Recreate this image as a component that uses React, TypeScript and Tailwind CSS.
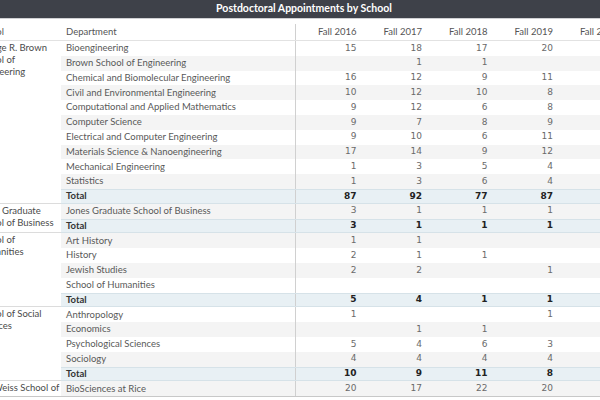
type Row = { dept: string; vals: (number | null)[]; total?: boolean };
type Group = { school: string; rows: Row[]; indent?: boolean };

const groups: Group[] = [
  {
    school: "George R. Brown School of Engineering",
    rows: [
      { dept: "Bioengineering", vals: [15, 18, 17, 20] },
      { dept: "Brown School of Engineering", vals: [null, 1, 1, null] },
      { dept: "Chemical and Biomolecular Engineering", vals: [16, 12, 9, 11] },
      { dept: "Civil and Environmental Engineering", vals: [10, 12, 10, 8] },
      { dept: "Computational and Applied Mathematics", vals: [9, 12, 6, 8] },
      { dept: "Computer Science", vals: [9, 7, 8, 9] },
      { dept: "Electrical and Computer Engineering", vals: [9, 10, 6, 11] },
      { dept: "Materials Science & Nanoengineering", vals: [17, 14, 9, 12] },
      { dept: "Mechanical Engineering", vals: [1, 3, 5, 4] },
      { dept: "Statistics", vals: [1, 3, 6, 4] },
      { dept: "Total", vals: [87, 92, 77, 87], total: true },
    ],
  },
  {
    school: "Jones Graduate School of Business",
    rows: [
      { dept: "Jones Graduate School of Business", vals: [3, 1, 1, 1] },
      { dept: "Total", vals: [3, 1, 1, 1], total: true },
    ],
  },
  {
    school: "School of Humanities",
    rows: [
      { dept: "Art History", vals: [1, 1, null, null] },
      { dept: "History", vals: [2, 1, 1, null] },
      { dept: "Jewish Studies", vals: [2, 2, null, 1] },
      { dept: "School of Humanities", vals: [null, null, null, null] },
      { dept: "Total", vals: [5, 4, 1, 1], total: true },
    ],
  },
  {
    school: "School of Social Sciences",
    rows: [
      { dept: "Anthropology", vals: [1, null, null, 1] },
      { dept: "Economics", vals: [null, 1, 1, null] },
      { dept: "Psychological Sciences", vals: [5, 4, 6, 3] },
      { dept: "Sociology", vals: [4, 4, 4, 4] },
      { dept: "Total", vals: [10, 9, 11, 8], total: true },
    ],
  },
  {
    school: "Weiss School of Natural Sciences",
    indent: true,
    rows: [
      { dept: "BioSciences at Rice", vals: [20, 17, 22, 20] },
      { dept: "Chemistry", vals: [14, 16, 12, 15] },
      { dept: "Earth, Environmental and Planetary Sciences", vals: [8, 9, 7, 6] },
    ],
  },
];

const years = ["Fall 2016", "Fall 2017", "Fall 2018", "Fall 2019", "Fall 2020"];

const font = { fontFamily: "Lato, 'Open Sans', sans-serif" };
const numFont = { fontFamily: "'DejaVu Sans', sans-serif" };

export default function App() {
  let idx = 0;
  return (
    <div className="w-[600px] h-[400px] overflow-hidden bg-white flex flex-col" style={font}>
      <div className="h-[18px] shrink-0 bg-[#3e4149] flex items-center justify-center text-white text-[10.5px] font-bold pl-[8px]">
        Postdoctoral Appointments by School
      </div>
      <div className="h-px shrink-0 bg-[#cfd0d3]" />
      <div className="h-[377px] shrink-0 overflow-hidden">
        <div className="ml-[-26px] w-[700px]">
          {/* header */}
          <div className="flex h-[22px] border-b border-[#e2e2e2] text-[9.5px] text-[#555]">
            <div className="w-[87px] shrink-0 pl-[2px] flex items-end pb-[1px] leading-[14px]">School</div>
            <div className="w-[235px] shrink-0 pl-[5px] flex items-end pb-[1px] leading-[14px] border-r border-[#d0d0d0] mt-[5px]">
              Department
            </div>
            {years.map((y) => (
              <div key={y} className="w-[65.5px] shrink-0 pr-[5px] flex items-end justify-end pb-[1px] leading-[14px]">
                {y}
              </div>
            ))}
          </div>
          {groups.map((g) => (
            <div key={g.school} className="flex">
              <div
                className={`w-[87px] shrink-0 pr-[1px] pt-[1px] text-[9.5px] leading-[12px] text-[#4a4a4a] border-b border-[#dcdcdc] ${
                  g.indent ? "pl-[19px]" : "pl-[2px]"
                }`}
              >
                {g.school}
              </div>
              <div className="flex flex-col">
                {g.rows.map((r) => {
                  const i = idx++;
                  const bg = r.total
                    ? "bg-[#e8f0f4] border-y border-[#d6e2e8] font-bold text-[#333]"
                    : i % 2 === 1
                    ? "bg-[#f4f4f4] text-[#595959]"
                    : "bg-white text-[#595959]";
                  return (
                    <div key={r.dept + i} className={`flex h-[14.8px] items-center text-[9.5px] ${bg}`}>
                      <div className="w-[235px] shrink-0 pl-[5px] h-full flex items-center border-r border-[#d0d0d0] whitespace-nowrap">
                        {r.dept}
                      </div>
                      {years.map((y, k) => (
                        <div
                          key={y}
                          style={numFont}
                          className={`w-[65.5px] shrink-0 pr-[5px] text-right text-[9px] ${
                            r.total ? "text-[#222]" : "text-[#6a6a6a]"
                          }`}
                        >
                          {k < 4 && r.vals[k] !== null ? r.vals[k] : ""}
                        </div>
                      ))}
                    </div>
                  );
                })}
              </div>
            </div>
          ))}
        </div>
      </div>
      <div className="h-px shrink-0 bg-[#c8c8c8]" />
    </div>
  );
}
